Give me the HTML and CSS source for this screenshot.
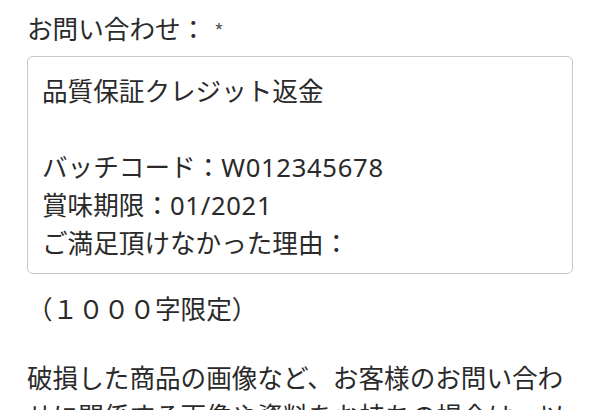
FILE: index.html
```html
<!DOCTYPE html>
<html lang="ja">
<head>
<meta charset="utf-8">
<link rel="stylesheet" href="styles.css">
</head>
<body>
<div class="page">
  <div class="label">お問い合わせ：<span class="req">*</span></div>
  <div class="box">
    <div class="line">品質保証クレジット返金</div>
    <div class="line">&nbsp;</div>
    <div class="line">バッチコード：<span class="latin">W012345678</span></div>
    <div class="line">賞味期限：<span class="latin">01/2021</span></div>
    <div class="line">ご満足頂けなかった理由：</div>
  </div>
  <div class="limit">（１０００字限定）</div>
  <p class="desc">破損した商品の画像など、お客様のお問い合わせに関係する画像や資料をお持ちの場合は、以下のボタンからアップロードしてください。</p>
</div>
</body>
</html>
```
FILE: styles.css
```css
html, body {
  margin: 0;
  padding: 0;
  background: #ffffff;
}
body {
  font-family: "Noto Sans CJK JP", "Noto Sans", sans-serif;
  color: #2a2a2a;
  font-size: 25.6px;
  line-height: 38px;
}
.page {
  width: 546px;
  padding: 9px 27px 0 27px;
}
.label {
  height: 38px;
}
.req {
  font-family: "Liberation Sans", sans-serif;
  font-size: 19px;
  color: #444;
  margin-left: 9px;
  vertical-align: 3px;
}
.latin {
  font-family: "Noto Sans", "Noto Sans CJK JP", sans-serif;
  letter-spacing: 0.7px;
}
.box {
  margin-top: 9px;
  border: 1px solid #c9c9c9;
  border-radius: 6px;
  padding: 14px 14px 12px 14px;
  box-shadow: 0 0 1px rgba(0,0,0,0.08);
}
.line {
  height: 38px;
  white-space: nowrap;
}
.limit {
  margin-top: 15px;
}
.desc {
  margin: 31px 0 0 0;
  line-height: 38px;
}
```
